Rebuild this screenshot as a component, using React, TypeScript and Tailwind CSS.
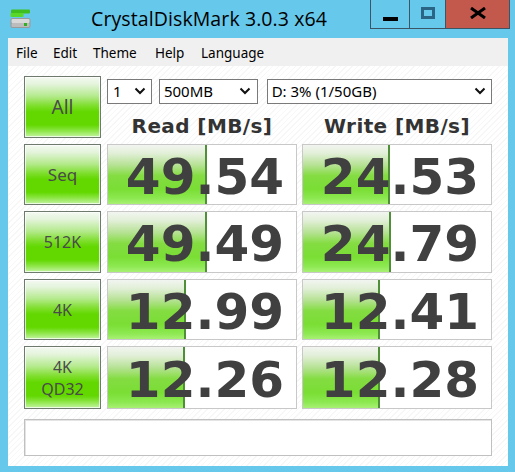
import React from "react";

const btnBg =
  "bg-[linear-gradient(to_bottom,#f4f9f2_0%,#e4f4dc_12%,#b4ea8c_32%,#7ede2c_48%,#62d800_58%,#62d800_80%,#8ee648_90%,#c4f4a4_100%)]";

function Chevron() {
  return (
    <svg width="12" height="8" viewBox="0 0 12 8" className="shrink-0">
      <polyline points="1.5,1.5 6,6 10.5,1.5" fill="none" stroke="#111" strokeWidth="2" />
    </svg>
  );
}

function TestButton({ children, h }: { children: React.ReactNode; h: string }) {
  return (
    <div
      className={`w-[77px] ${h} shrink-0 border border-[#6f7a6f] ${btnBg} shadow-[inset_0_0_0_1px_rgba(255,255,255,0.7)] flex flex-col items-center justify-center text-[#4a4a4a] leading-[22px]`}
      style={{ fontFamily: '"Noto Sans", sans-serif' }}
    >
      {children}
    </div>
  );
}

function Cell({ value, fill }: { value: string; fill: number }) {
  return (
    <div className="relative w-[190px] h-full border border-[#c8c8c8] bg-white overflow-hidden">
      <div
        className="absolute left-0 top-0 bottom-0 bg-[linear-gradient(to_bottom,#f2f5f0_0%,#e2efd8_14%,#b6e294_34%,#84dc42_52%,#7ade34_75%,#8ce850_90%,#a8f074_100%)] border-r-2 border-[#4f8f37]"
        style={{ width: fill }}
      />
      <div
        className="relative h-full flex items-center justify-end pr-[12px] pt-[4px] text-[50px] font-bold text-[#404040] leading-none"
        style={{ fontFamily: '"DejaVu Sans", Verdana, sans-serif' }}
      >
        {value}
      </div>
    </div>
  );
}

function Row({
  label,
  h,
  r,
  rf,
  w,
  wf,
}: {
  label: React.ReactNode;
  h: string;
  r: string;
  rf: number;
  w: string;
  wf: number;
}) {
  return (
    <div className={`flex ${h}`}>
      <TestButton h="h-full">{label}</TestButton>
      <div className="ml-[6px] h-full">
        <Cell value={r} fill={rf} />
      </div>
      <div className="ml-[5px] h-full">
        <Cell value={w} fill={wf} />
      </div>
    </div>
  );
}

export default function App() {
  return (
    <div className="w-[515px] h-[472px] bg-[#66c8eb] relative overflow-hidden" style={{ fontFamily: '"Noto Sans", sans-serif' }}>
      {/* Title bar */}
      <div className="h-[38px] flex items-start">
        <div className="ml-[10px] mt-[9px]">
          <svg width="21" height="20" viewBox="0 0 21 20">
            <rect x="1" y="0.5" width="19" height="4" rx="1" fill="#3fbf1f" />
            <rect x="0.5" y="4" width="13" height="4" rx="1" fill="#5ad82a" />
            <rect x="0.5" y="9" width="20" height="10" rx="2" fill="#9a9a9a" />
            <rect x="1.5" y="10" width="18" height="4" rx="1" fill="#d8d8d8" />
            <rect x="1.5" y="14" width="18" height="4" rx="1" fill="#bcbcbc" />
            <rect x="14" y="14" width="3" height="3" fill="#2fb01f" />
          </svg>
        </div>
        <div className="ml-[60px] mt-[6px] text-[19.5px] leading-[26px] text-black tracking-[0.1px]" style={{ fontFamily: '"Open Sans", sans-serif' }}>
          CrystalDiskMark 3.0.3 x64
        </div>
        <div className="ml-auto mr-[5px] flex h-[29px] border-x border-b border-[#3b5567]">
          <div className="w-[38px] h-full flex items-center justify-center">
            <div className="w-[15px] h-[4px] bg-black mt-[10px]" />
          </div>
          <div className="w-[36px] h-full border-l border-[#3b5567] flex items-center justify-center">
            <div className="w-[14px] h-[12px] border-[3px] border-[#2b6585] mb-[3px]" />
          </div>
          <div className="w-[64px] h-full border-l border-[#3b5567] bg-[#c3594c] flex items-center justify-center">
            <svg width="18" height="12" viewBox="0 0 18 12" className="mb-[2px]">
              <path d="M2 1 L16 11 M16 1 L2 11" stroke="#000" strokeWidth="3" />
            </svg>
          </div>
        </div>
      </div>

      {/* Client area */}
      <div className="ml-[8px] w-[500px] h-[428px] flex flex-col">
        {/* Menu */}
        <div className="h-[28px] bg-[#f0f0f0] flex items-center pl-[8px] pt-[2px] text-[13.5px] text-black">
          <span className="w-[37px]">File</span>
          <span className="w-[40px]">Edit</span>
          <span className="w-[62px]">Theme</span>
          <span className="w-[46px]">Help</span>
          <span>Language</span>
        </div>

        {/* Content */}
        <div className="flex-1 bg-[repeating-linear-gradient(135deg,#ffffff_0px,#ffffff_3px,#f7f7f7_3px,#f7f7f7_4px)] pl-[16px] pt-[10px] flex flex-col">
          {/* Top row */}
          <div className="flex h-[62px]">
            <TestButton h="h-full">
              <span className="text-[19px]">All</span>
            </TestButton>
            <div className="ml-[6px] w-[385px] flex flex-col">
              <div className="mt-[3px] h-[25px] flex text-[15px] text-black">
                <div className="w-[45px] h-full border border-[#7a7a7a] bg-white flex items-center pl-[5px] pr-[5px] justify-between">
                  <span>1</span>
                  <Chevron />
                </div>
                <div className="ml-[7px] w-[99px] h-full border border-[#7a7a7a] bg-white flex items-center pl-[4px] pr-[6px] justify-between">
                  <span>500MB</span>
                  <Chevron />
                </div>
                <div className="ml-[9px] w-[226px] h-full border border-[#7a7a7a] bg-white flex items-center pl-[4px] pr-[5px] justify-between">
                  <span>D: 3% (1/50GB)</span>
                  <Chevron />
                </div>
              </div>
              <div
                className="mt-[8px] flex text-[20px] font-bold text-[#333] leading-[28px] tracking-[0.4px]"
                style={{ fontFamily: '"DejaVu Sans", Verdana, sans-serif' }}
              >
                <div className="w-[190px] text-center">Read [MB/s]</div>
                <div className="ml-[5px] w-[190px] text-center">Write [MB/s]</div>
              </div>
            </div>
          </div>

          <div className="mt-[6px]">
            <Row label={<span className="text-[17px]">Seq</span>} h="h-[61px]" r="49.54" rf={99} w="24.53" wf={87} />
          </div>
          <div className="mt-[6px]">
            <Row label={<span className="text-[16px]">512K</span>} h="h-[62px]" r="49.49" rf={99} w="24.79" wf={88} />
          </div>
          <div className="mt-[6px]">
            <Row label={<span className="text-[16px]">4K</span>} h="h-[61px]" r="12.99" rf={78} w="12.41" wf={77} />
          </div>
          <div className="mt-[6px]">
            <Row
              label={
                <>
                  <span className="text-[16px]">4K</span>
                  <span className="text-[16px]">QD32</span>
                </>
              }
              h="h-[63px]"
              r="12.26"
              rf={77}
              w="12.28"
              wf={77}
            />
          </div>

          <div className="mt-[10px] w-[468px] h-[37px] border border-[#c0c0c0] bg-white shadow-[inset_1px_1px_0_#e4e4e4]" />
        </div>
      </div>
    </div>
  );
}
